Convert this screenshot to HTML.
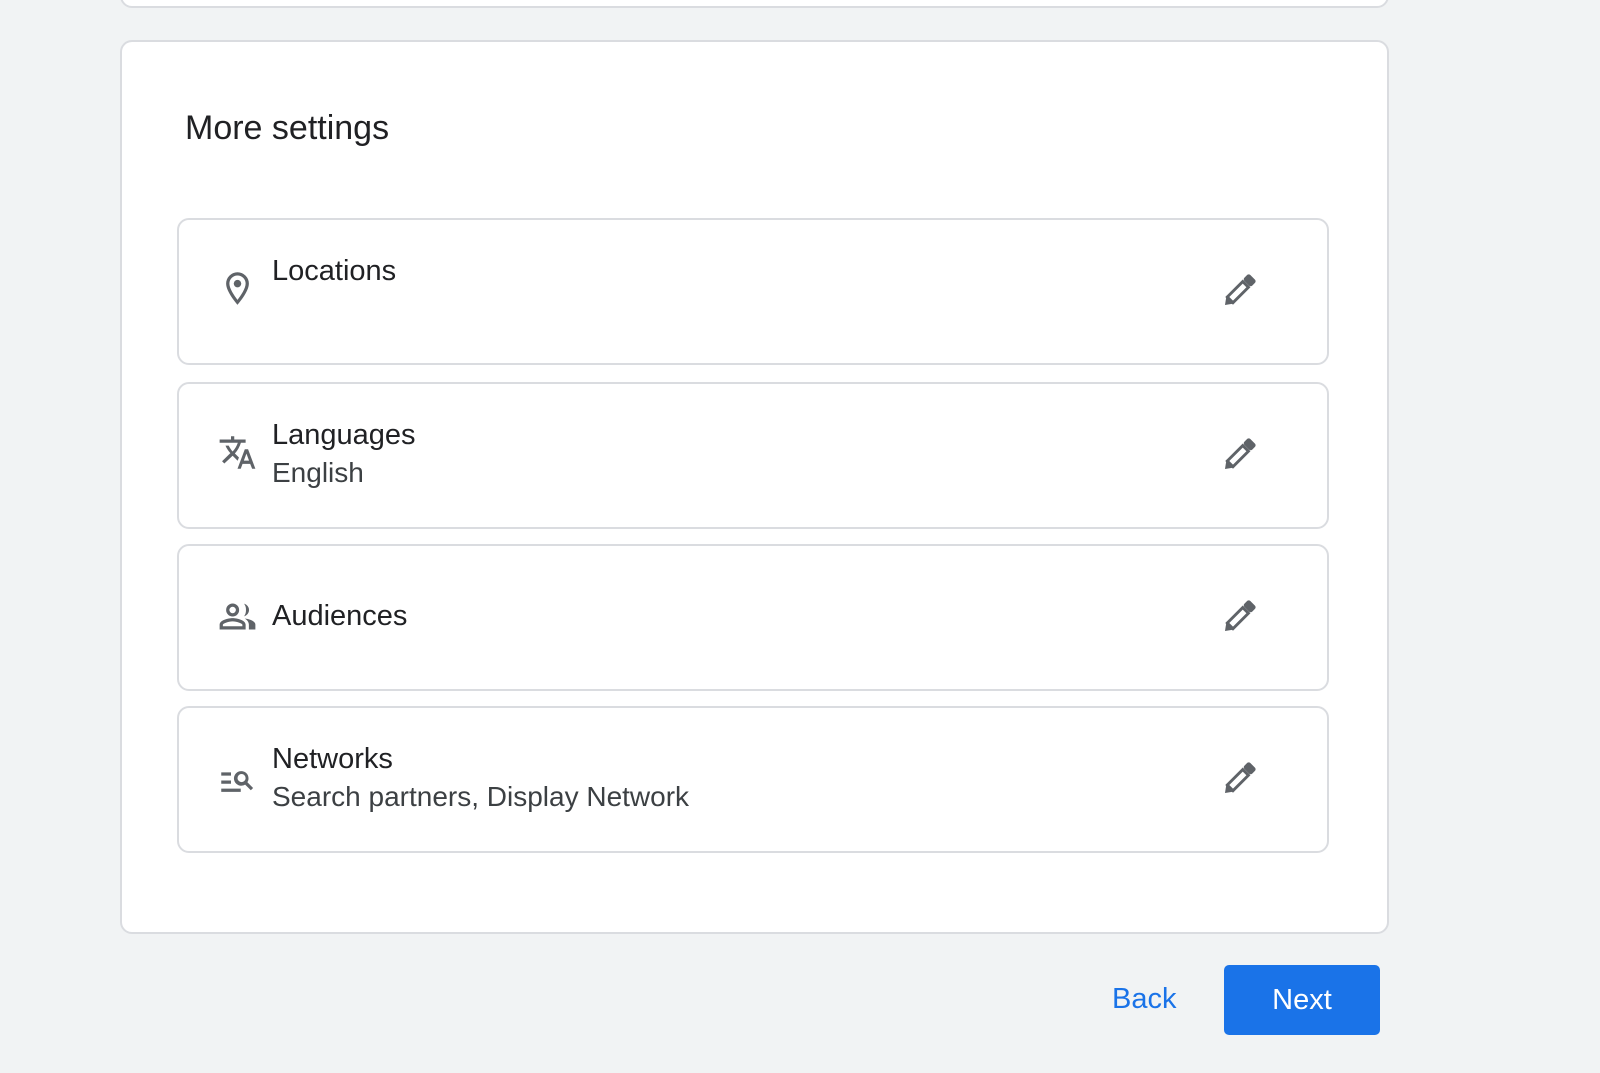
<!DOCTYPE html>
<html><head><style>
body{margin:0;width:1600px;height:1073px;background:#f1f3f4;font-family:"Liberation Sans",sans-serif;position:relative;overflow:hidden;color:#202124}
.top{position:absolute;left:120px;top:-20px;width:1265px;height:24px;background:#fff;border:2px solid #dadce0;border-radius:12px}
.card{position:absolute;left:120px;top:40px;width:1265px;height:890px;background:#fff;border:2px solid #dadce0;border-radius:12px}
h1{position:absolute;left:185px;top:109px;margin:0;font-size:34px;font-weight:normal;color:#202124}
.row{position:absolute;left:177px;width:1148px;height:143px;border:2px solid #dadce0;border-radius:12px;background:#fff}
.ic{position:absolute;left:39px;width:39px;height:39px}
.lab{position:absolute;left:93px;font-size:29px;color:#202124}
.sub{position:absolute;left:93px;font-size:28px;color:#3c4043}
.pen{position:absolute;left:1036px;top:49px;width:46px;height:46px}
.back{position:absolute;left:1112px;top:983px;font-size:29px;color:#1a73e8}
.next{position:absolute;left:1224px;top:965px;width:156px;height:70px;background:#1a73e8;border-radius:5px;color:#fff;font-size:29px;text-align:center;line-height:70px}
</style></head><body>
<div class="top"></div>
<div class="card"></div>
<h1>More settings</h1>
<svg width="0" height="0" style="position:absolute"><defs>
<symbol id="pen" viewBox="0 0 24 24"><g transform="rotate(45 12 12)"><rect x="9.9" y="6.4" width="4.2" height="11.4" fill="none" stroke="#5f6368" stroke-width="1.5"/><rect x="9.1" y="1.2" width="5.8" height="4.4" rx="1.2" fill="#5f6368"/><path d="M9.1 17.6h5.8L12 21.6z" fill="#5f6368"/></g></symbol></defs></svg>
<div class="row" style="top:218px">
<svg class="ic" style="top:49px" viewBox="0 0 24 24"><path fill="#5f6368" d="M12 2a7 7 0 0 0-7 7c0 5.2 7 13 7 13s7-7.8 7-13a7 7 0 0 0-7-7zm0 17c-2-2.6-5-7-5-10a5 5 0 0 1 10 0c0 3-3 7.4-5 10z"/><circle cx="12" cy="9" r="2.3" fill="#5f6368"/></svg>
<div class="lab" style="top:35px">Locations</div>
<svg class="pen"><use href="#pen"/></svg>
</div>
<div class="row" style="top:382px">
<svg class="ic" style="top:49px" viewBox="0 0 24 24"><path fill="#5f6368" d="M12.9 15.1l-2.5-2.5.03-.03A17.5 17.5 0 0 0 14.1 6H17V4h-7V2H8v2H1v2h11.2c-.7 2-1.7 3.8-3.2 5.4-1-1.1-1.8-2.300-2.4-3.6h-2c.7 1.6 1.7 3.2 3 4.6l-5.1 5 1.4 1.4L9 14l3.1 3.1.8-2z"/><path fill="#5f6368" d="M18.5 10h-2L12 22h2l1.1-3h4.7l1.2 3h2l-4.5-12zm-2.6 7l1.6-4.3 1.6 4.3h-3.2z"/></svg>
<div class="lab" style="top:35px">Languages</div>
<div class="sub" style="top:73px">English</div>
<svg class="pen"><use href="#pen"/></svg>
</div>
<div class="row" style="top:544px">
<svg class="ic" style="top:51px" viewBox="0 0 24 24"><path fill="#5f6368" d="M9 12a4 4 0 1 0 0-8 4 4 0 0 0 0 8zm0-6a2 2 0 1 1 0 4 2 2 0 0 1 0-4zm0 7c-2.7 0-8 1.3-8 4v3h16v-3c0-2.7-5.3-4-8-4zm6 5H3v-1c.2-.7 3.3-2 6-2s5.8 1.3 6 2v1zM16 4.1a4 4 0 0 1 0 7.8A5.9 5.9 0 0 0 17.2 8 5.9 5.9 0 0 0 16 4.1zm.5 9.1c1.4.9 2.5 2.2 2.5 3.8v3h4v-3c0-2.2-3.600-3.5-6.5-3.8z"/></svg>
<div class="lab" style="top:54px">Audiences</div>
<svg class="pen"><use href="#pen"/></svg>
</div>
<div class="row" style="top:706px">
<svg class="ic" style="top:53px" viewBox="0 0 24 24"><path fill="#5f6368" d="M2 7h6v2H2zm0 5h6v2H2zm0 5h12v2H2zm19.6-.4l-3.5-3.5a4.5 4.5 0 1 0-1.4 1.4l3.5 3.5 1.4-1.4zM14.5 13a2.5 2.5 0 1 1 0-5 2.5 2.5 0 0 1 0 5z"/></svg>
<div class="lab" style="top:35px">Networks</div>
<div class="sub" style="top:73px">Search partners, Display Network</div>
<svg class="pen"><use href="#pen"/></svg>
</div>
<div class="back">Back</div>
<div class="next">Next</div>
</body></html>
